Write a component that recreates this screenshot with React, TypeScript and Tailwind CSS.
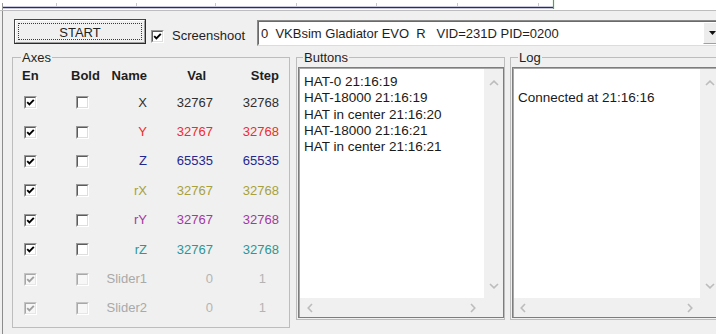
import React from "react";

type Row = {
  name: string;
  val: string;
  step: string;
  color: string;
  disabled?: boolean;
};

const rows: Row[] = [
  { name: "X", val: "32767", step: "32768", color: "text-[#2e2e2e]" },
  { name: "Y", val: "32767", step: "32768", color: "text-[#f02b2b]" },
  { name: "Z", val: "65535", step: "65535", color: "text-[#26268f]" },
  { name: "rX", val: "32767", step: "32768", color: "text-[#a6a13c]" },
  { name: "rY", val: "32767", step: "32768", color: "text-[#a238a2]" },
  { name: "rZ", val: "32767", step: "32768", color: "text-[#2f9595]" },
  { name: "Slider1", val: "0", step: "1", color: "text-[#a9a9a9]", disabled: true },
  { name: "Slider2", val: "0", step: "1", color: "text-[#a9a9a9]", disabled: true },
];

function Check({ checked, disabled }: { checked: boolean; disabled?: boolean }) {
  return (
    <span
      className={
        disabled
          ? "box-border flex w-[13px] h-[13px] border border-t-[#c4c4c4] border-l-[#c4c4c4] border-r-[#ffffff] border-b-[#ffffff] shrink-0"
          : "box-border flex w-[13px] h-[13px] border border-t-[#9a9a9a] border-l-[#9a9a9a] border-r-[#ffffff] border-b-[#ffffff] shrink-0"
      }
    >
      <span
        className={
          disabled
            ? "flex-1 flex items-center justify-center border border-t-[#a8a8a8] border-l-[#a8a8a8] border-r-[#e6e6e6] border-b-[#e6e6e6] bg-[#f7f7f7]"
            : "flex-1 flex items-center justify-center border border-t-[#5c5c5c] border-l-[#5c5c5c] border-r-[#dedede] border-b-[#dedede] bg-white"
        }
      >
        {checked && (
          <svg width="9" height="9" viewBox="0 0 9 9">
            <polyline
              points="1.2,4.2 3.4,6.4 7.8,1.8"
              fill="none"
              stroke={disabled ? "#a0a0a0" : "#000000"}
              strokeWidth="1.9"
            />
          </svg>
        )}
      </span>
    </span>
  );
}

function ChevronV({ up }: { up?: boolean }) {
  return (
    <svg width="10" height="6" viewBox="0 0 10 6">
      <polyline
        points={up ? "1,5 5,1.2 9,5" : "1,1 5,4.8 9,1"}
        fill="none"
        stroke="#bcbcbc"
        strokeWidth="1.6"
      />
    </svg>
  );
}

function ChevronH({ left }: { left?: boolean }) {
  return (
    <svg width="6" height="10" viewBox="0 0 6 10">
      <polyline
        points={left ? "5,1 1.2,5 5,9" : "1,1 4.8,5 1,9"}
        fill="none"
        stroke="#bcbcbc"
        strokeWidth="1.6"
      />
    </svg>
  );
}

function ListBox({
  lines,
  boxClass,
  hLeft,
  hRight,
  vClass,
}: {
  lines: string[];
  boxClass: string;
  hLeft: string;
  hRight: string;
  vClass: string;
}) {
  return (
    <div className={`ml-[1px] mt-[9px] h-[251px] shrink-0 flex ${boxClass}`}>
      <div className="flex-1 flex flex-col border-t border-l border-t-[#a9a9a9] border-l-[#a9a9a9] min-w-0">
        <div className="flex flex-1 min-h-0">
          <div className="flex-1 bg-white pl-[4px] pt-[5px] text-[13.5px] leading-[16.25px] text-[#1a1a1a] whitespace-pre min-w-0 overflow-hidden">
            {lines.map((l, i) => (
              <div key={i} className="h-[16.25px]">
                {l}
              </div>
            ))}
          </div>
          <div className={`shrink-0 bg-[#f0f0f0] flex flex-col justify-between ${vClass}`}>
            <div className="h-[28px] flex items-center">
              <ChevronV up />
            </div>
            <div className="h-[24px] flex items-center">
              <ChevronV />
            </div>
          </div>
        </div>
        <div className="h-[19px] shrink-0 bg-[#f0f0f0] flex">
          <div className="flex-1 flex justify-between">
            <div className={`${hLeft} flex items-center justify-center`}>
              <ChevronH left />
            </div>
            <div className={`${hRight} flex items-center justify-center`}>
              <ChevronH />
            </div>
          </div>
          <div className={`shrink-0 ${vClass}`} />
        </div>
      </div>
    </div>
  );
}

export default function App() {
  const ticks = [56, 136, 215, 296, 376, 457, 538];
  return (
    <div className="w-[716px] h-[334px] overflow-hidden bg-[#f0f0f0] text-[13px] text-[#1e1e1e] font-['Liberation_Sans',Arial,sans-serif] flex flex-col">
      <div className="h-[10px] bg-white shrink-0">
        <svg width="716" height="10" viewBox="0 0 716 10">
          {ticks.map((x) => (
            <line key={x} x1={x + 0.5} y1="3" x2={x + 0.5} y2="6" stroke="#c9c9c9" strokeWidth="1" />
          ))}
          <line x1="3" y1="7.5" x2="553" y2="7.5" stroke="#242a7c" strokeWidth="1.3" />
          <line x1="553.5" y1="0" x2="553.5" y2="9" stroke="#4aa84a" strokeWidth="1.2" />
          <line x1="2.5" y1="3" x2="2.5" y2="10" stroke="#9a9a9a" strokeWidth="1" />
        </svg>
      </div>
      <div className="h-px bg-[#bdbdbd] shrink-0" />
      <div className="flex flex-1 min-h-0">
        <div className="w-[2px] shrink-0" />
        <div className="w-px bg-[#8c8c8c] shrink-0" />
        <div className="w-[713px] flex flex-col">
          {/* controls row */}
          <div className="flex items-start pt-[8px] h-[35px] shrink-0">
            <button className="ml-[11px] w-[132px] h-[25px] shrink-0 border border-[#454545] border-b-[#2a2a2a] border-r-[#2a2a2a] bg-[#f0f0f0] p-0 flex">
              <span className="flex-1 flex p-[2px] border border-t-white border-l-white border-r-[#a0a0a0] border-b-[#a0a0a0]">
                <span className="flex-1 flex items-center justify-center border border-dotted border-[#3a3a3a] pt-[1px] text-[13px] leading-none text-[#1e1e1e]">
                  START
                </span>
              </span>
            </button>
            <div className="ml-[5px] mt-[11px] shrink-0">
              <Check checked />
            </div>
            <div className="ml-[8px] mt-[9px] w-[85px] shrink-0 leading-[16px] text-[#1e1e1e]">
              Screenshoot
            </div>
            <div className="mt-[1px] h-[26px] w-[459px] shrink-0 border border-r-0 border-t-[#8a8a8a] border-l-[#8a8a8a] border-b-[#dcdcdc] flex">
              <div className="flex-1 flex border border-r-0 border-t-[#6a6a6a] border-l-[#6a6a6a] border-b-white bg-white min-w-0">
                <div className="flex-1 flex items-center pl-[2px] whitespace-pre text-[13px] leading-none text-[#1e1e1e] min-w-0">
                  {"0  VKBsim Gladiator EVO  R   VID=231D PID=0200"}
                </div>
                <div className="w-[13px] shrink-0 bg-[#ececec] border border-r-0 border-t-white border-l-white border-b-[#a0a0a0] flex items-center pl-[5px] overflow-hidden">
                  <svg width="7" height="4" viewBox="0 0 7 4" className="shrink-0">
                    <polygon points="0,0 7,0 3.5,4" fill="#111111" />
                  </svg>
                </div>
              </div>
            </div>
          </div>

          {/* groups row */}
          <div className="flex items-start mt-[11px] shrink-0">
            {/* Axes */}
            <div className="relative ml-[9px] w-[278px] h-[271px] shrink-0 border border-[#bdbdbd]">
              <span className="absolute left-[8px] -top-[8px] px-[1px] bg-[#f0f0f0] leading-[15px] text-[#1e1e1e]">
                Axes
              </span>
              <div className="flex h-[30px] pt-[10px] font-bold leading-[16px] text-[#1e1e1e]">
                <div className="w-[44px] pl-[9px]">En</div>
                <div className="w-[49px] pl-[14px]">Bold</div>
                <div className="w-[41px] text-right">Name</div>
                <div className="w-[66px] text-right pr-[7px]">Val</div>
                <div className="w-[66px] text-right">Step</div>
              </div>
              {rows.map((r) => (
                <div key={r.name} className="flex items-center h-[29.4px] leading-[16px]">
                  <div className="w-[44px] pl-[11px]">
                    <Check checked disabled={r.disabled} />
                  </div>
                  <div className="w-[49px] pl-[19px]">
                    <Check checked={false} disabled={r.disabled} />
                  </div>
                  <div className={`w-[41px] text-right whitespace-nowrap ${r.color}`}>{r.name}</div>
                  <div className={`w-[66px] text-right ${r.disabled ? "text-[#b4b4b4]" : r.color}`}>
                    {r.val}
                  </div>
                  <div
                    className={`w-[66px] text-right ${r.disabled ? "pr-[13px] text-[#b4b4b4]" : r.color}`}
                  >
                    {r.step}
                  </div>
                </div>
              ))}
            </div>

            {/* Buttons */}
            <div className="relative ml-[6px] w-[209px] h-[263px] shrink-0 border border-[#bdbdbd]">
              <span className="absolute left-[6px] -top-[8px] px-[1px] bg-[#f0f0f0] leading-[15px] text-[#1e1e1e]">
                Buttons
              </span>
              <ListBox
                lines={[
                  "HAT-0 21:16:19",
                  "HAT-18000 21:16:19",
                  "HAT in center 21:16:20",
                  "HAT-18000 21:16:21",
                  "HAT in center 21:16:21",
                ]}
                boxClass="w-[206px] border border-[#7d7d7d]"
                hLeft="w-[20px]"
                hRight="w-[22px]"
                vClass="w-[19px] items-center"
              />
            </div>

            {/* Log */}
            <div className="relative ml-[5px] w-[206px] h-[263px] shrink-0 border border-r-0 border-[#bdbdbd]">
              <span className="absolute left-[7px] -top-[8px] px-[1px] bg-[#f0f0f0] leading-[15px] text-[#1e1e1e]">
                Log
              </span>
              <ListBox
                lines={["", "Connected at 21:16:16"]}
                boxClass="w-[204px] border border-r-0 border-[#7d7d7d]"
                hLeft="w-[18px]"
                hRight="w-[20px]"
                vClass="w-[16px] items-start pl-[5px]"
              />
            </div>
          </div>
        </div>
      </div>
    </div>
  );
}
